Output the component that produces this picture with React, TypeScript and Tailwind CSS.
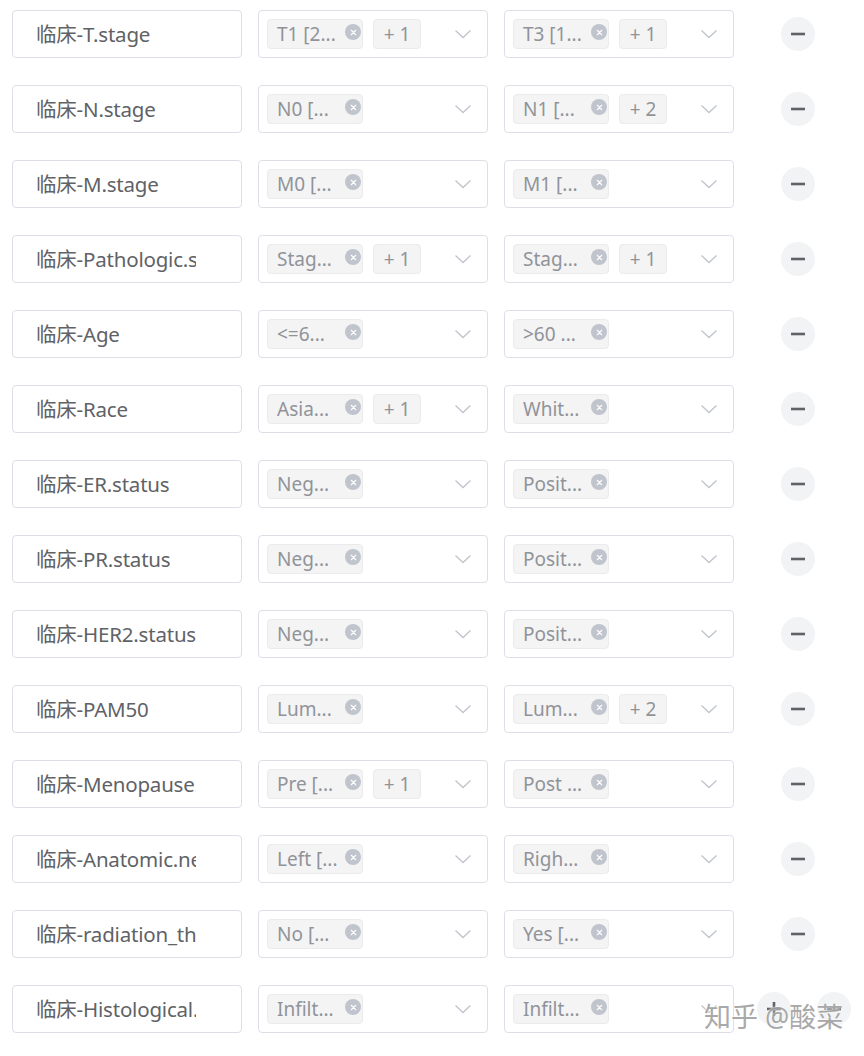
import React from "react";

type Row = { label: string; a: string; aMore?: string; b: string; bMore?: string };

const rows: Row[] = [
  { label: "临床-T.stage", a: "T1 [2...", aMore: "+ 1", b: "T3 [1...", bMore: "+ 1" },
  { label: "临床-N.stage", a: "N0 [...", b: "N1 [...", bMore: "+ 2" },
  { label: "临床-M.stage", a: "M0 [...", b: "M1 [..." },
  { label: "临床-Pathologic.stage", a: "Stag...", aMore: "+ 1", b: "Stag...", bMore: "+ 1" },
  { label: "临床-Age", a: "<=6...", b: ">60 ..." },
  { label: "临床-Race", a: "Asia...", aMore: "+ 1", b: "Whit..." },
  { label: "临床-ER.status", a: "Neg...", b: "Posit..." },
  { label: "临床-PR.status", a: "Neg...", b: "Posit..." },
  { label: "临床-HER2.status", a: "Neg...", b: "Posit..." },
  { label: "临床-PAM50", a: "Lum...", b: "Lum...", bMore: "+ 2" },
  { label: "临床-Menopause.status", a: "Pre [...", aMore: "+ 1", b: "Post ..." },
  { label: "临床-Anatomic.neoplasm", a: "Left [...", b: "Righ..." },
  { label: "临床-radiation_therapy", a: "No [...", b: "Yes [..." },
  { label: "临床-Histological.type", a: "Infilt...", b: "Infilt..." },
];

const font = { fontFamily: '"Noto Sans", "Noto Sans CJK SC", sans-serif' };

function CloseIcon() {
  return (
    <span className="w-[16px] h-[16px] rounded-full bg-[#c0c4cc] flex items-center justify-center -translate-y-[2px] mr-[1px] shrink-0">
      <svg width="9" height="9" viewBox="0 0 10 10">
        <path d="M2.5 2.5 L7.5 7.5 M7.5 2.5 L2.5 7.5" stroke="#ffffff" strokeWidth="1.2" strokeLinecap="round" />
      </svg>
    </span>
  );
}

function Tag({ text }: { text: string }) {
  return (
    <span className="box-border h-[30px] w-[96px] rounded-[4px] bg-[#f4f4f5] border border-[#ebebed] pl-[9px] flex items-center justify-between text-[19px] leading-[28px] text-[#909399] whitespace-nowrap overflow-hidden">
      <span>{text}</span>
      <CloseIcon />
    </span>
  );
}

function MoreTag({ text }: { text: string }) {
  return (
    <span className="box-border h-[30px] w-[48px] rounded-[4px] bg-[#f4f4f5] border border-[#ebebed] flex items-center justify-center text-[19px] leading-[28px] text-[#909399] whitespace-nowrap">
      {text}
    </span>
  );
}

function Select({ tag, more }: { tag: string; more?: string }) {
  return (
    <div className="box-border w-[230px] h-[48px] ml-[16px] border border-[#dcdfe6] rounded-[4px] bg-white flex items-center pl-[8px]">
      <div className="flex items-center gap-[10px]">
        <Tag text={tag} />
        {more && <MoreTag text={more} />}
      </div>
      <div className="flex-1" />
      <svg width="18" height="10" viewBox="0 0 18 10" className="mr-[15px]">
        <path d="M1.5 1.5 L9 8.5 L16.5 1.5" fill="none" stroke="#c0c4cc" strokeWidth="1.3" />
      </svg>
    </div>
  );
}

function CircleBtn({ kind, className }: { kind: "minus" | "plus"; className: string }) {
  return (
    <div className={"w-[34px] h-[34px] rounded-full bg-[#f2f3f5] flex items-center justify-center shrink-0 " + className}>
      <svg width="16" height="16" viewBox="0 0 16 16">
        <path d="M1 8 H15" stroke="#606266" strokeWidth="2.6" />
        {kind === "plus" && <path d="M8 1 V15" stroke="#606266" strokeWidth="2.6" />}
      </svg>
    </div>
  );
}

export default function App() {
  return (
    <div className="relative bg-white w-[864px] h-[1056px] overflow-hidden" style={font}>
      <div className="flex flex-col gap-[27px] pt-[10px] pl-[12px]">
        {rows.map((r, i) => {
          const last = i === rows.length - 1;
          return (
            <div key={i} className="flex items-center h-[48px]">
              <div className="box-border w-[230px] h-[48px] border border-[#dcdfe6] rounded-[4px] bg-white pl-[23px] pr-[45px] flex items-center">
                <div className="overflow-hidden whitespace-nowrap text-[20.5px] tracking-[-0.2px] leading-[30px] text-[#606266]">{r.label}</div>
              </div>
              <Select tag={r.a} more={r.aMore} />
              <Select tag={r.b} more={r.bMore} />
              {last ? (
                <>
                  <CircleBtn kind="plus" className="ml-[23px]" />
                  <CircleBtn kind="minus" className="ml-[26px]" />
                </>
              ) : (
                <CircleBtn kind="minus" className="ml-[47px]" />
              )}
            </div>
          );
        })}
      </div>
      <div
        className="absolute left-[704px] top-[1003px] text-[27px] leading-none text-[#a0a0a0] whitespace-nowrap opacity-90 [text-shadow:0_0_2px_#ffffff,0_0_2px_#ffffff]"
        style={font}
      >
        知乎 @酸菜
      </div>
    </div>
  );
}
